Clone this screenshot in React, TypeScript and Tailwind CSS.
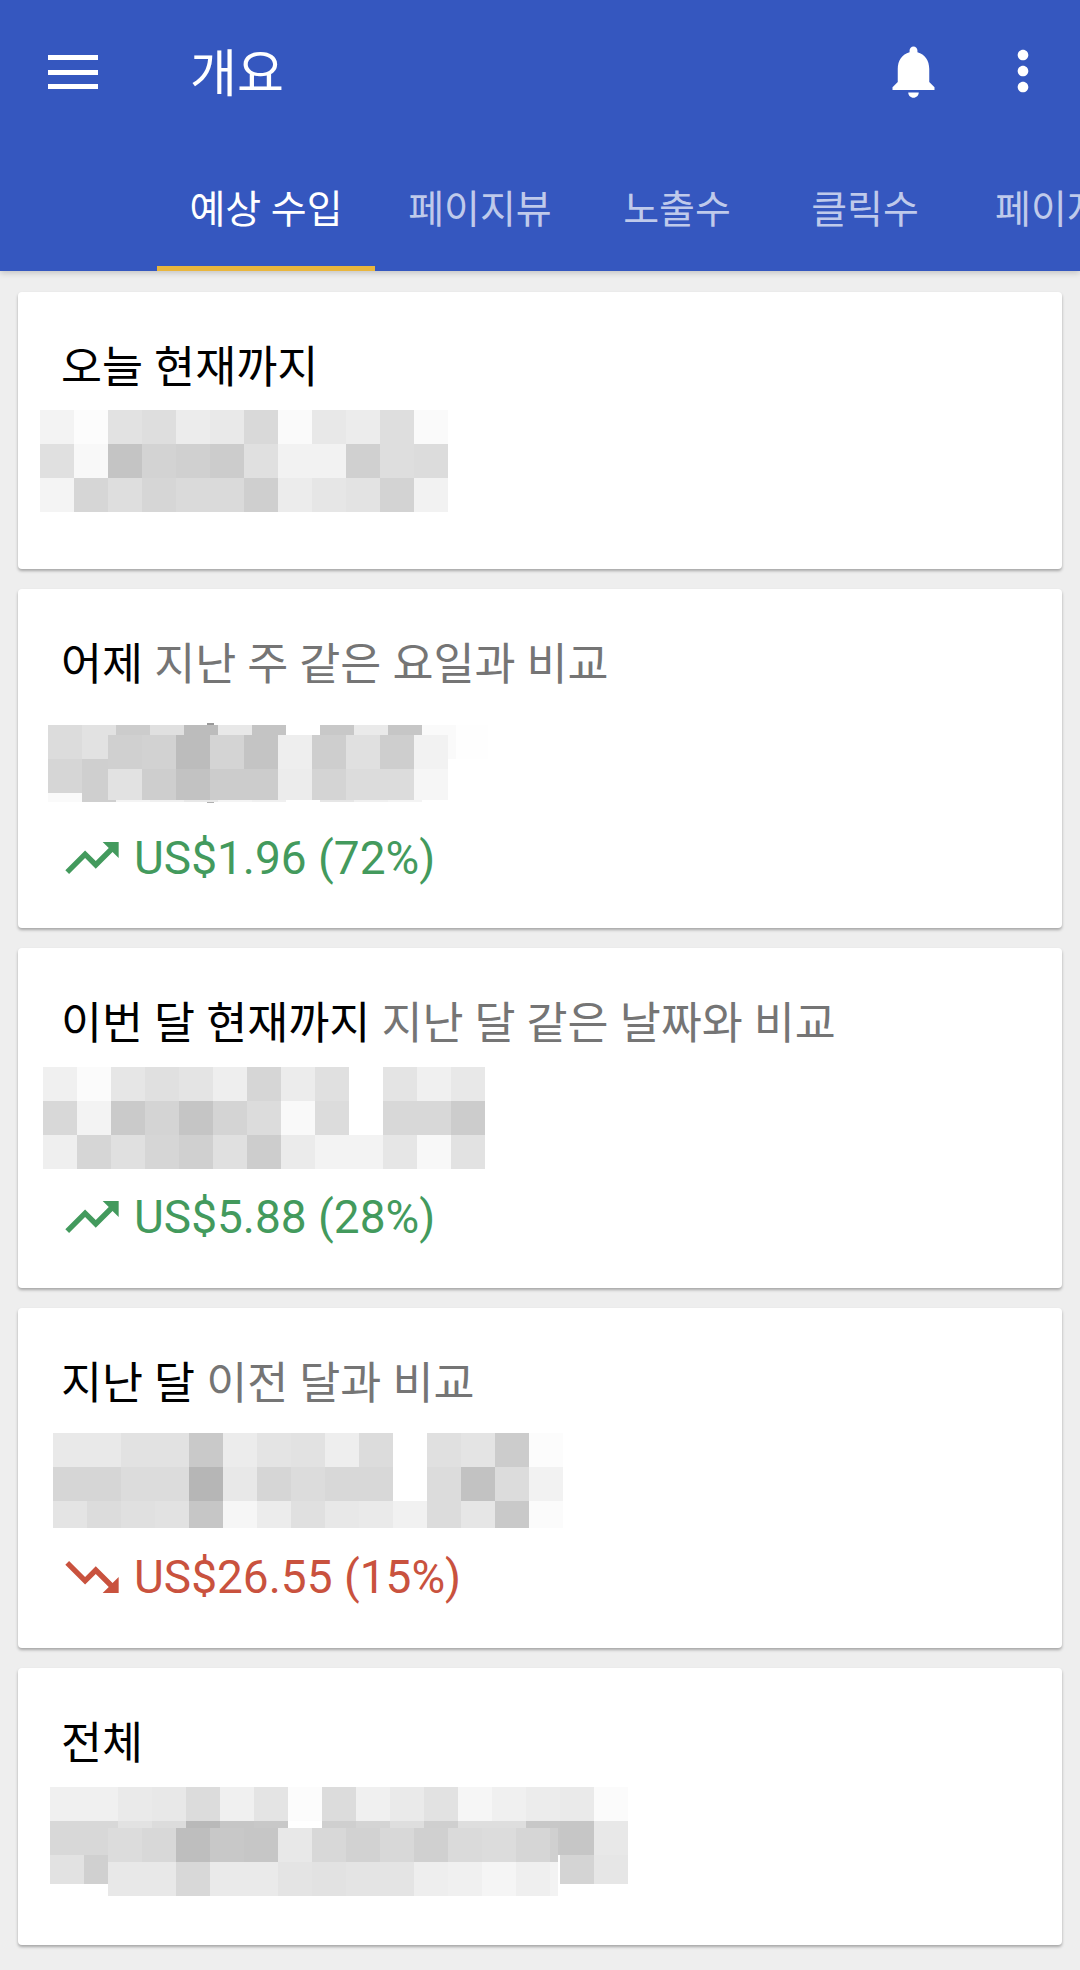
import React from "react";

type Layer = { x: number; y: number; cw?: number; hs: number[]; rows: string[][]; limit?: number };

const row = (s: string) => s.split(",").map((v) => "#" + v + v + v);

function Mosaic({ x, y, w, h, layers, className, extra }: { x: number; y: number; w: number; h: number; layers: Layer[]; className: string; extra?: React.ReactNode }) {
  return (
    <svg width={w} height={h} viewBox={`${x} ${y} ${w} ${h}`} className={"block " + className} shapeRendering="crispEdges">
      {extra}
      {layers.map((l, li) => {
        let cy = l.y;
        return l.rows.map((r, ri) => {
          const ry = cy;
          cy += l.hs[ri];
          return r.map((c, ci) => {
            const rx = l.x + ci * (l.cw ?? 34);
            const rw = l.limit ? Math.min(34, l.limit - rx) : 34;
            return <rect key={`${li}-${ri}-${ci}`} x={rx} y={ry} width={rw} height={l.hs[ri]} fill={c} />;
          });
        });
      })}
    </svg>
  );
}

function TrendUp() {
  return (
    <svg viewBox="0 0 24 24" className="w-16 h-16 shrink-0" fill="#439a5d">
      <path d="M16 6l2.29 2.29-4.88 4.88-4-4L2 16.59 3.41 18l6-6 4 4 6.3-6.29L22 12V6z" />
    </svg>
  );
}
function TrendDown() {
  return (
    <svg viewBox="0 0 24 24" className="w-16 h-16 shrink-0" fill="#c9523e">
      <path d="M16 18l2.29-2.29-4.88-4.88-4 4L2 7.41 3.41 6l6 6 4-4 6.3 6.29L22 12v6z" />
    </svg>
  );
}

function Card({ h, black, gray, children, trend }: { h: string; black: string; gray?: string; children: React.ReactNode; trend?: { up: boolean; text: string } }) {
  return (
    <div className={"mx-[18px] bg-white rounded-[4px] shadow-[0_2px_3px_rgba(0,0,0,0.3)] " + h}>
      <div className="pt-[46px] pl-[43px] h-[105px] text-[44.6px] leading-[60px] whitespace-nowrap text-black">
        {black}
        {gray ? <span className="text-[#757575]"> {gray}</span> : null}
      </div>
      <div className="h-[132px] flow-root">{children}</div>
      {trend ? (
        <div className="flex items-center h-16 ml-[42px] gap-[10px]">
          {trend.up ? <TrendUp /> : <TrendDown />}
          <span className={"text-[46px] leading-[64px] " + (trend.up ? "text-[#439a5d]" : "text-[#c9523e]")}>{trend.text}</span>
        </div>
      ) : null}
    </div>
  );
}

function Tab({ w, label, active }: { w: string; label: string; active?: boolean }) {
  return (
    <div className={"relative shrink-0 h-[88px] text-center text-[39px] leading-[54px] whitespace-nowrap " + w + (active ? " text-white" : " text-white/70")}>
      {label}
      {active ? <div className="absolute left-0 right-0 bottom-0 h-[5px] bg-[#e9b63d]" /> : null}
    </div>
  );
}

export default function App() {
  return (
    <div className="w-[1080px] h-[1970px] overflow-hidden bg-[#eeeeee] font-['Roboto','Noto_Sans_CJK_KR',sans-serif]">
      <header className="relative h-[271px] bg-[#3557bf] flex flex-col justify-between shadow-[0_2px_6px_rgba(0,0,0,0.18)]">
        <div className="flex items-center pt-10 h-[104px]">
          <div className="ml-[48px] w-[50px] h-[34px] flex flex-col justify-between shrink-0">
            <div className="h-[5px] bg-white" />
            <div className="h-[5px] bg-white" />
            <div className="h-[5px] bg-white" />
          </div>
          <div className="ml-[92px] text-[51px] leading-[64px] text-white mt-[5px]">개요</div>
          <div className="flex-1" />
          <svg viewBox="0 0 24 24" className="w-[63px] h-[63px] mt-[-2px]" fill="#fff">
            <path d="M12 22c1.1 0 2-.9 2-2h-4c0 1.1.89 2 2 2zm6-6v-5c0-3.07-1.64-5.64-4.5-6.32V4c0-.83-.67-1.5-1.5-1.5s-1.5.67-1.5 1.5v.68C7.63 5.36 6 7.92 6 11v5l-2 2v1h16v-1l-2-2z" />
          </svg>
          <svg viewBox="0 0 24 24" className="w-16 h-16 ml-[46px] mr-[25px] mt-[-2px]" fill="#fff">
            <path d="M12 8c1.1 0 2-.9 2-2s-.9-2-2-2-2 .9-2 2 .9 2 2 2zm0 2c-1.1 0-2 .9-2 2s.9 2 2 2 2-.9 2-2-.9-2-2-2zm0 6c-1.1 0-2 .9-2 2s.9 2 2 2 2-.9 2-2-.9-2-2-2z" />
          </svg>
        </div>
        <nav className="flex pl-[157px] overflow-hidden">
          <Tab w="w-[218px]" label="예상 수입" active />
          <Tab w="w-[210px]" label="페이지뷰" />
          <Tab w="w-[184px]" label="노출수" />
          <Tab w="w-[192px]" label="클릭수" />
          <Tab w="px-[34px]" label="페이지 RPM" />
        </nav>
      </header>

      <main className="pt-[21px] flex flex-col gap-5">
        <Card h="h-[277px]" black="오늘 현재까지">
          <Mosaic
            className="ml-[22px] mt-[13px]"
            x={40}
            y={410}
            w={408}
            h={102}
            layers={[
              {
                x: 40,
                y: 410,
                hs: [34, 34, 34],
                rows: [
                  row("f3,fc,e2,de,ec,e9,d9,fa,e8,ec,de,fa"),
                  row("e0,f8,c4,d3,d0,cc,e0,f2,f2,d0,de,dc"),
                  row("f4,d6,de,d6,da,da,cf,ec,e6,e3,d3,f2"),
                ],
              },
            ]}
          />
        </Card>

        <Card h="h-[339px]" black="어제" gray="지난 주 같은 요일과 비교" trend={{ up: true, text: "US$1.96 (72%)" }}>
          <Mosaic
            className="ml-[30px] mt-[28px]"
            x={48}
            y={722}
            w={440}
            h={82}
            extra={
              <>
                <rect x={207} y={723} width={7} height={2} fill="#9a9a9a" />
                <rect x={207} y={802} width={7} height={1} fill="#b0b0b0" />
              </>
            }
            layers={[
              {
                x: 48,
                y: 725,
                hs: [34, 34, 9],
                rows: [
                  row("dc,e2,cc,e0,bc,e8,c4,ff,c8,ea,c6,fa,fe"),
                  row("d6,cf,d8,d8,d0,e8,d0,ff,d0,e0,d8,ff,ff"),
                  row("fa,cf,f4,f0,e8,f4,f0,ff,e6,f0,f4,ff,ff"),
                ],
              },
              {
                x: 108,
                y: 735,
                hs: [34, 31],
                rows: [row("d0,d2,bc,d4,c4,ee,ce,e0,ce,f2"), row("e2,ce,c2,cc,cc,ec,d4,dc,dc,f6")],
              },
            ]}
          />
        </Card>

        <Card h="h-[340px]" black="이번 달 현재까지" gray="지난 달 같은 날짜와 비교" trend={{ up: true, text: "US$5.88 (28%)" }}>
          <Mosaic
            className="ml-[25px] mt-[14px]"
            x={43}
            y={1067}
            w={442}
            h={102}
            layers={[
              {
                x: 43,
                y: 1067,
                hs: [34, 34, 34],
                rows: [
                  row("f0,fb,e6,e0,e4,ee,d6,ec,e0,ff,e4,f0,e8"),
                  row("d8,f3,ca,d4,c5,d4,dc,f9,dc,ff,d8,d8,cc"),
                  row("ef,d6,e0,d6,d0,e0,cd,eb,f3,f3,e6,f8,e2"),
                ],
              },
            ]}
          />
        </Card>

        <Card h="h-[340px]" black="지난 달" gray="이전 달과 비교" trend={{ up: false, text: "US$26.55 (15%)" }}>
          <Mosaic
            className="ml-[35px] mt-[20px]"
            x={53}
            y={1433}
            w={510}
            h={95}
            layers={[
              {
                x: 53,
                y: 1433,
                hs: [34, 34, 27],
                rows: [
                  row("e9,e9,e2,e2,c9,ec,e4,e2,ee,dc,ff,e0,e4,cc,fc"),
                  row("d6,d6,dc,dc,b6,e8,d6,dc,d8,d8,ff,dc,c2,dc,f2"),
                  row("e4,dc,e0,e2,c6,f6,ec,e0,e8,ea,f1,dc,e6,c9,fb"),
                ],
              },
            ]}
          />
        </Card>

        <Card h="h-[277px]" black="전체">
          <Mosaic
            className="ml-[32px] mt-[14px]"
            x={50}
            y={1787}
            w={578}
            h={109}
            layers={[
              {
                x: 50,
                y: 1787,
                hs: [34, 34, 29],
                rows: [
                  row("f0,f0,ea,e8,dc,f0,e4,fc,dc,f0,ea,e2,f6,f0,ec,ea,fb"),
                  row("d8,d8,e2,dc,b9,c6,c8,ff,cf,d4,de,cf,de,de,c8,c6,e8"),
                  row("e2,d0,ff,ff,ff,ff,ff,ff,ff,ff,ff,ff,ff,ff,ff,d4,e6"),
                ],
              },
              {
                x: 108,
                y: 1828,
                limit: 558,
                hs: [34, 34],
                rows: [row("dc,d8,be,c8,c6,e8,d8,d2,d8,d0,da,dc,d6,d0"), row("e8,e8,d8,ea,ea,e4,e2,e4,e4,ee,f0,f5,ef,f3")],
              },
            ]}
          />
        </Card>
      </main>
    </div>
  );
}
